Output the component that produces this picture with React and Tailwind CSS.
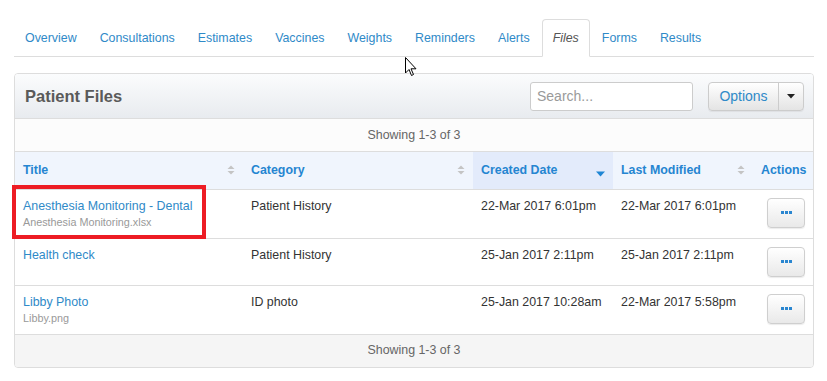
import React from 'react';

const tabs = ['Overview', 'Consultations', 'Estimates', 'Vaccines', 'Weights', 'Reminders', 'Alerts', 'Files', 'Forms', 'Results'];

const files = [
  { title: 'Anesthesia Monitoring - Dental', file: 'Anesthesia Monitoring.xlsx', category: 'Patient History', created: '22-Mar 2017 6:01pm', modified: '22-Mar 2017 6:01pm' },
  { title: 'Health check', file: '', category: 'Patient History', created: '25-Jan 2017 2:11pm', modified: '25-Jan 2017 2:11pm' },
  { title: 'Libby Photo', file: 'Libby.png', category: 'ID photo', created: '25-Jan 2017 10:28am', modified: '22-Mar 2017 5:58pm' },
];

function SortBoth() {
  return (
    <svg width="8" height="10" viewBox="0 0 8 10" className="shrink-0">
      <path d="M4 0.5 L7.5 4 L0.5 4 Z" fill="#c4c4c4" />
      <path d="M4 9.5 L7.5 6 L0.5 6 Z" fill="#c4c4c4" />
    </svg>
  );
}

function SortDown() {
  return (
    <svg width="9" height="6" viewBox="0 0 9 6" className="shrink-0 mt-[8px]">
      <path d="M0 0.5 L9 0.5 L4.5 5.5 Z" fill="#1f86d4" />
    </svg>
  );
}

function DotsButton() {
  return (
    <button className="ml-[6px] w-[38px] h-[30px] flex items-center justify-center gap-[1px] rounded-[4px] border border-[#cfcfcf] bg-gradient-to-b from-white to-[#e9e9e9] shadow-[0_1px_1px_rgba(0,0,0,0.08)]">
      <span className="w-[3px] h-[3px] bg-[#2a86d0]" />
      <span className="w-[3px] h-[3px] bg-[#2a86d0]" />
      <span className="w-[3px] h-[3px] bg-[#2a86d0]" />
    </button>
  );
}

export default function App() {
  return (
    <div className="relative w-[827px] h-[381px] bg-white text-[12.4px] text-[#333] pl-[14px] pt-[19px]" style={{ fontFamily: '"Liberation Sans", Arial, sans-serif' }}>
      {/* tabs */}
      <ul className="flex w-[800px] border-b border-[#dddddd] h-[38px]">
        {tabs.map((t) => (
          <li key={t} className="mr-[1px] -mb-px">
            {t === 'Files' ? (
              <span className="block h-[38px] px-[10px] pt-[10px] leading-[17px] italic text-[#555] bg-white border border-[#dddddd] border-b-white rounded-t-[4px]">{t}</span>
            ) : (
              <span className="block h-[38px] px-[11px] pt-[11px] leading-[17px] text-[#2f8ac8]">{t}</span>
            )}
          </li>
        ))}
      </ul>

      {/* panel */}
      <div className="mt-[16px] w-[800px] border border-[#dddddd] rounded-[4px] overflow-hidden">
        <div className="h-[45px] flex items-center justify-between pl-[10px] pr-[9px] bg-gradient-to-b from-[#fbfcfd] to-[#e8ebef] border-b border-[#dddddd]">
          <h2 className="text-[16.5px] font-bold text-[#5a5a5a]">Patient Files</h2>
          <div className="flex items-center gap-[15px]">
            <input
              placeholder="Search..."
              className="w-[163px] h-[29px] px-[6px] text-[14px] border border-[#cccccc] rounded-[3px] bg-white placeholder:text-[#9a9a9a] outline-none"
            />
            <div className="flex h-[29px] rounded-[4px] border border-[#cccccc] bg-gradient-to-b from-white to-[#e4e4e4] shadow-[0_1px_1px_rgba(0,0,0,0.06)]">
              <span className="w-[70px] flex items-center justify-center text-[14px] text-[#2f8ac8] border-r border-[#cccccc]">Options</span>
              <span className="w-[24px] flex items-center justify-center">
                <svg width="8" height="5" viewBox="0 0 8 5"><path d="M0 0 L8 0 L4 4.5 Z" fill="#222" /></svg>
              </span>
            </div>
          </div>
        </div>

        <div className="h-[33px] flex items-center justify-center bg-[#fcfcfc] text-[#666] border-b border-[#dddddd]">Showing 1-3 of 3</div>

        <table className="w-full table-fixed border-collapse">
          <colgroup>
            <col className="w-[228px]" />
            <col className="w-[230px]" />
            <col className="w-[140px]" />
            <col className="w-[140px]" />
            <col className="w-[60px]" />
          </colgroup>
          <thead>
            <tr className="h-[37px] bg-[#f0f5fd] text-[#2585d1] font-bold text-left border-b border-[#dddddd]">
              <th className="px-[8px] font-bold">
                <div className="flex items-center justify-between"><span>Title</span><SortBoth /></div>
              </th>
              <th className="px-[8px] font-bold">
                <div className="flex items-center justify-between"><span>Category</span><SortBoth /></div>
              </th>
              <th className="px-[8px] font-bold bg-[#e3ebfb]">
                <div className="flex items-center justify-between"><span>Created Date</span><SortDown /></div>
              </th>
              <th className="px-[8px] font-bold">
                <div className="flex items-center justify-between"><span>Last Modified</span><SortBoth /></div>
              </th>
              <th className="px-[8px] font-bold">Actions</th>
            </tr>
          </thead>
          <tbody>
            {files.map((f) => (
              <tr key={f.title} className="border-b border-[#dddddd] align-top">
                <td className="px-[8px] pt-[8px] pb-[8px]">
                  <div className="leading-[17px] text-[#2f8ac8]">{f.title}</div>
                  {f.file && <div className="text-[10.8px] leading-[15px] text-[#999]">{f.file}</div>}
                </td>
                <td className="px-[8px] pt-[8px] leading-[17px]">{f.category}</td>
                <td className="px-[8px] pt-[8px] leading-[17px] whitespace-nowrap">{f.created}</td>
                <td className="px-[8px] pt-[8px] leading-[17px] whitespace-nowrap">{f.modified}</td>
                <td className="pt-[8px] pb-[8px] pl-[8px]">
                  <DotsButton />
                </td>
              </tr>
            ))}
          </tbody>
        </table>

        <div className="h-[32px] flex items-center justify-center bg-[#f5f5f5] text-[#666]">Showing 1-3 of 3</div>
      </div>

      {/* annotation box */}
      <div className="absolute left-[12px] top-[185px] w-[194px] h-[54px] border-[4px] border-[#ed1c24]" />

      {/* mouse cursor */}
      <svg className="absolute left-[405px] top-[57px]" width="13" height="20" viewBox="0 0 13 20">
        <path d="M0.5 0.5 L0.5 16 L4 12.5 L6.5 18.5 L8.5 17.5 L6 11.8 L11 11.8 Z" fill="#fff" stroke="#000" strokeWidth="1" strokeLinejoin="miter" />
      </svg>
    </div>
  );
}
